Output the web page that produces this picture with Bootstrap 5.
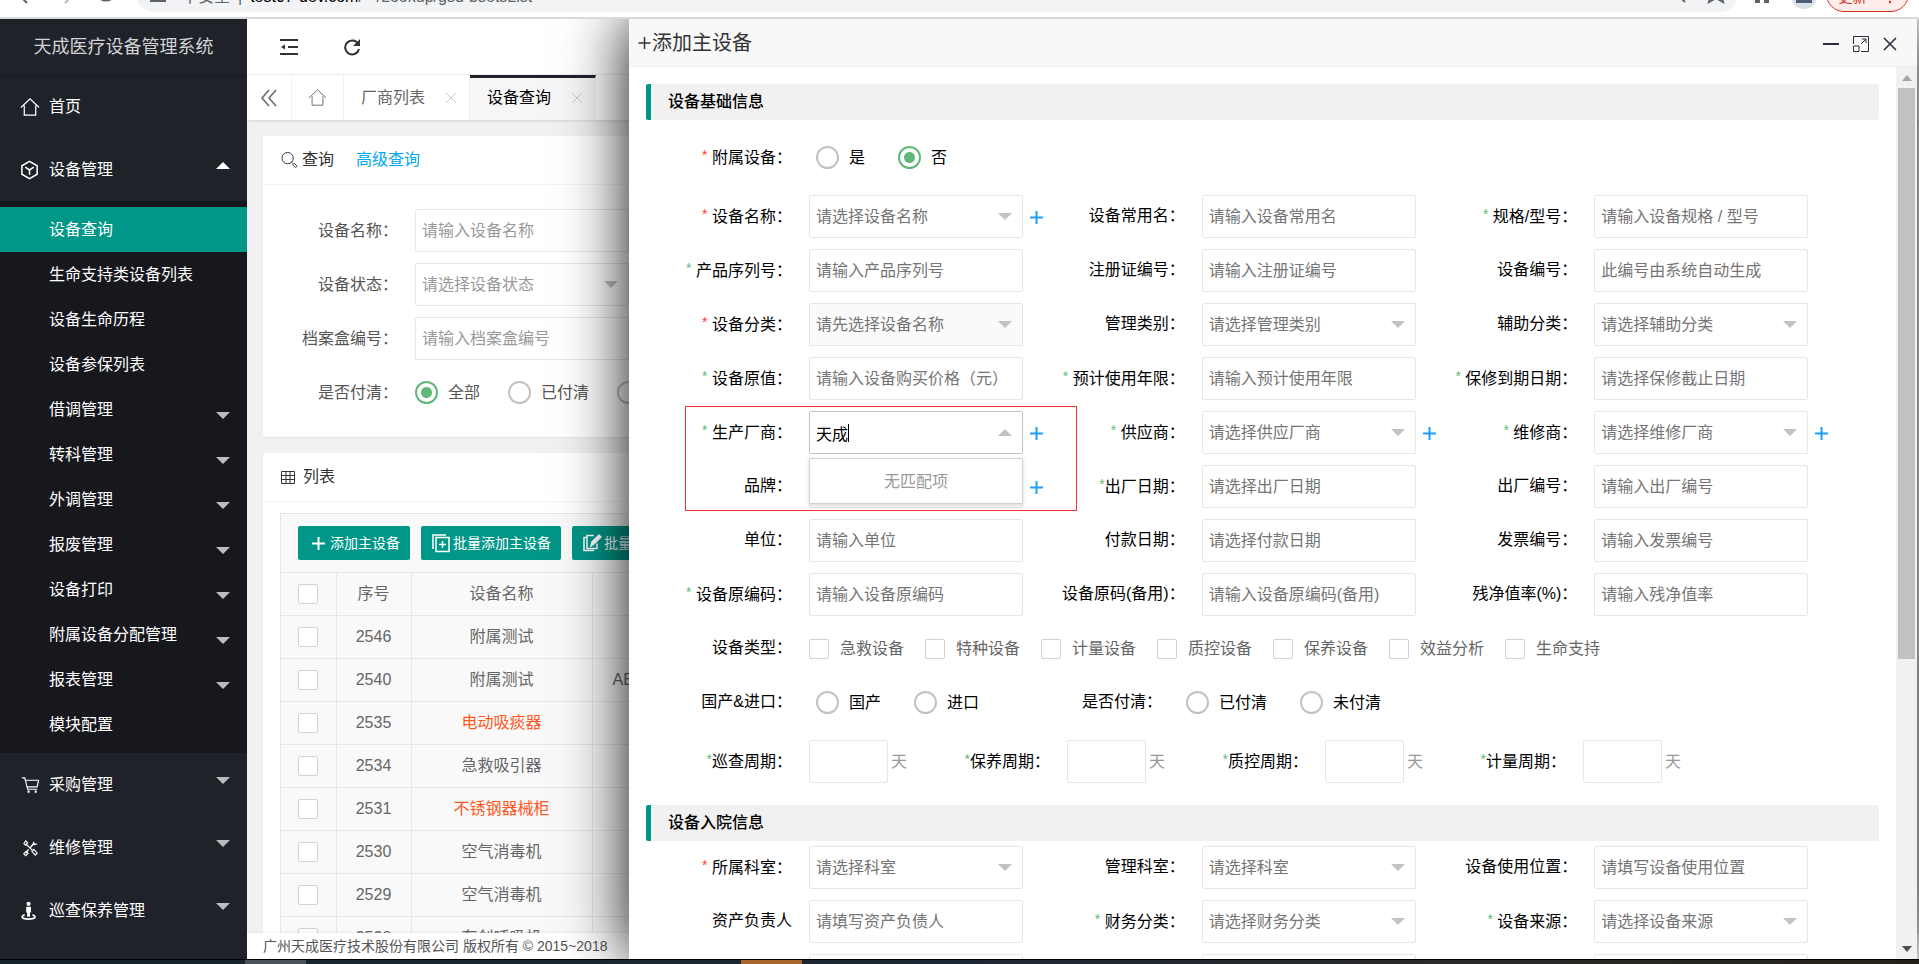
<!DOCTYPE html>
<html lang="zh-CN">
<head>
<meta charset="utf-8">
<meta name="viewport" content="width=device-width, initial-scale=1">
<title>天成医疗设备管理系统</title>
<link rel="stylesheet" href="https://cdn.jsdelivr.net/npm/bootstrap@5.3.0/dist/css/bootstrap.min.css">
<style>
  body { font: 16px/24px "Liberation Sans", "Noto Sans CJK SC", sans-serif; color: #000; background: #f1f1f1; }
  a { text-decoration: none; }
  svg { display: block; fill: none; stroke: currentColor; flex: none; }
  svg.solid { fill: currentColor; stroke: none; }
  button { background: none; border: 0; padding: 0; color: inherit; }

  /* browser strip */
  .chrome-strip { height: 19px; background: #fff; border-bottom: 2px solid #d9d9df; z-index: 5; position: relative; }
  .chrome-row { height: 36px; margin-bottom: 5px; flex: none; color: #5f6368; }
  .addr-pill { background: #f1f3f4; border-radius: 18px; height: 36px; padding-left: 14px; }
  .addr-pill > span { padding-top: 9px; }
  .update-pill { border: 1px solid #d93025; background: #fcecea; color: #d93025; border-radius: 18px; height: 36px; width: 83px; margin-right: 10px; padding-top: 8px; font-size: 14px; }
  .avatar-dot { width: 26px; height: 26px; border-radius: 50%; background: #dde1e6; margin: 0 9px 3px 21px; color: #4a5d75; }

  /* sidebar */
  .side { width: 247px; background: #20222a; color: #fff; }
  .side a { color: #fff; }
  .side-title { height: 56px; line-height: 56px; font-size: 18px; color: #d2d3d4; box-shadow: 0 1px 2px rgba(0,0,0,.25); }
  .side-top { height: 63px; padding: 0 17px 0 20px; gap: 9px; }
  .side-top svg { width: 20px; height: 20px; }
  .side-sub { background: #17181d; padding: 6px 0; }
  .side-sub a { height: 45px; padding: 0 17px 0 49px; }
  .side-sub a.on { background: #009688; }
  .tri { border: 7px solid transparent; border-top-color: #bcbdbf; border-bottom-width: 0; margin-left: auto; }
  .tri.up { border-top-width: 0; border-bottom: 7px solid #fff; }
  .side-top .tri { margin-bottom: 8px; }
  .side-sub .tri { margin-top: 11px; }

  /* main area */
  .topbar { height: 56px; background: #fff; border-bottom: 1px solid #f2f2f2; padding-left: 33px; gap: 45px; color: #333; }
  .tabbar { height: 45px; background: #fff; box-shadow: 0 1px 3px rgba(0,0,0,.12); position: relative; }
  .tabbar > * { border-right: 1px solid #f2f2f2; height: 45px; color: #666; }
  .tab-prev { width: 45px; }
  .tab-home { width: 52px; }
  .tab-item { width: 126px; padding: 0 13px 0 17px; }
  .tab-item svg { color: #c8c8c8; }
  .tab-item.on { background: #f6f6f6; color: #000; border-top: 3px solid #20222a; padding-bottom: 3px; }
  .panel { background: #fff; border-radius: 2px; box-shadow: 0 1px 2px rgba(0,0,0,.06); }
  .panel-head { height: 49px; border-bottom: 1px solid #f4f4f4; padding-left: 18px; color: #333; }
  .more-link { color: #01aaed; margin-left: 18px; }
  .q-form { padding: 24px 0 12px; }
  .q-row { height: 43px; margin-bottom: 11px; color: #555; }
  .q-row > .lab { width: 135px; margin-right: 17px; text-align: right; white-space: nowrap; }
  .q-row .box { width: 214px; }
  .q-row .opt { margin-right: 28px; }
  .q-row .box .ctl::placeholder, .q-row select.ctl { color: #999; }
  .copy { height: 26px; background: #fff; padding-left: 16px; font-size: 14px; line-height: 26px; color: #555; box-shadow: 0 -1px 2px rgba(0,0,0,.06); position: relative; }

  /* form controls */
  .box { position: relative; flex: none; }
  .ctl { display: block; width: 100%; height: 43px; border: 1px solid #e6e6e6; border-radius: 2px; background: #fff; padding: 0 6px; color: #000; appearance: none; outline: 0; }
  .ctl::placeholder { color: #757575; opacity: 1; }
  select.ctl { color: #757575; }
  select.ctl:disabled { background: #fafafa; opacity: 1; }
  .box.pick::after { content: ""; position: absolute; right: 11px; top: 18px; border: 7px solid transparent; border-top-color: #c2c2c2; border-bottom-width: 0; pointer-events: none; }
  .box.pick.open::after { border-top-width: 0; border-bottom: 7px solid #c2c2c2; }
  .box.open .ctl { border-color: #c2c2c2; caret-color: transparent; }
  .caret-bar { position: absolute; left: 39px; top: 13px; width: 1px; height: 18px; background: #000; }
  .rad { appearance: none; width: 23px; height: 23px; border: 2px solid #c2c2c2; border-radius: 50%; margin: 0 10px 0 0; background: #fff; flex: none; }
  .rad:checked { border-color: #5fb878; background: radial-gradient(circle, #5fb878 0 5px, #fff 6px); }
  .chk { appearance: none; width: 20px; height: 20px; border: 1px solid #d2d2d2; border-radius: 2px; margin: 0 11px 0 0; background: #fff; flex: none; }
  .opt { display: flex; align-items: center; margin-right: 33px; white-space: nowrap; }
  .opt.kind { margin-right: 21px; }

  /* list */
  .grid-wrap { margin: 11px 17px 0; border: 1px solid #e6e6e6; border-bottom: 0; background: #f9f9f9; }
  .tools { height: 58px; padding-left: 17px; gap: 11px; }
  .tools button { height: 34px; background: #009688; color: #fff; border-radius: 2px; font-size: 14px; padding: 0 10px 0 13px; gap: 4px; display: flex; align-items: center; white-space: nowrap; }
  .tools button.tight { padding: 0 10px; gap: 2px; }
  .grid-t { table-layout: fixed; width: 100%; color: #666; }
  .c-chk { width: 55px; }
  .c-no { width: 75px; }
  .c-name { width: 181px; }
  .grid-t th, .grid-t td { height: 43px; border: 1px solid #e6e6e6; border-left: 0; text-align: center; font-weight: 400; padding: 0; }
  .grid-t td:nth-child(4) { text-align: left; padding-left: 20px; }
  .grid-t .chk { display: block; margin: 0 auto; }
  .grid-t .hot { color: #ff5722; }

  /* dialog */
  .dlg { position: absolute; left: 629px; right: 2px; top: 0; bottom: 0; background: #fff; box-shadow: 0 0 60px rgba(0,0,0,.95); }
  .dlg-head { height: 48px; background: #f8f8f8; border-bottom: 1px solid #eee; padding: 0 20px 0 8px; font-size: 20px; color: #333; }
  .dlg-head .acts { color: #2e2d3c; gap: 14px; margin-top: 3px; }
  .dlg-body { min-height: 0; }
  .dlg-form { padding: 17px 17px 0; overflow: hidden; }
  .sec { height: 36px; line-height: 35px; font-size: 16px; font-weight: 500; margin: 0; padding-left: 17px; background: #f1f1f1; border-left: 5px solid #009688; border-radius: 2px; }
  .sec-b { margin-top: 22px; }
  .rows { padding: 16px 35px 0 20px; }
  .rows-b { padding-top: 5px; }
  .f-row { display: grid; grid-template-columns: repeat(3, minmax(0, 1fr)); margin-bottom: 11px; }
  .cell, .line { display: flex; align-items: center; height: 43px; position: relative; }
  .line { margin-bottom: 11px; }
  .lab-d { width: 126px; margin-right: 17px; text-align: right; white-space: nowrap; flex: none; padding-bottom: 2px; }
  .lab-d.next { width: 143px; }
  .cell .box { width: 214px; }
  .s-red, .s-grn { font-style: normal; color: #ff3b30; font-size: 14px; vertical-align: 3px; }
  .s-grn { color: #5fb878; }
  .addb { color: #1e9fff; margin-left: 7px; padding-top: 2px; }
  .none-menu { position: absolute; left: 0; right: 0; top: 47px; height: 46px; line-height: 46px; background: #fff; border: 1px solid #d2d2d2; border-radius: 2px; box-shadow: 0 2px 4px rgba(0,0,0,.15); text-align: center; color: #999; z-index: 2; }
  .note-box { position: absolute; left: 19px; top: -5px; width: 392px; height: 105px; border: 1px solid #f33; z-index: 3; pointer-events: none; }
  .radios { padding-left: 7px; }
  .days { width: 79px; }
  .unit { color: #999; margin-left: 3px; width: 16px; }
  .sbar { width: 21px; background: #f1f1f1; padding: 0 2px; }
  .sbar .end { height: 21px; color: #a3a3a3; }
  .sbar .end.down { color: #505050; }
  .sbar .thumb { background: #c1c1c1; width: 17px; flex: 0 0 64%; }

  .taskbar { height: 5px; border-top: 1px solid #000; background: linear-gradient(90deg, #17232b, #1d2733 50%, #2a2a2a 75%, #242119); padding-left: 245px; }
  .taskbar i { width: 61px; background: #4b5358; }
  .taskbar i + i { background: #aa652d; margin-left: 435px; }
</style>
</head>
<body class="vh-100 d-flex flex-column overflow-hidden">

<header class="chrome-strip d-flex align-items-end overflow-hidden flex-shrink-0">
  <div class="chrome-row d-flex align-items-end w-100">
    <svg width="120" height="22" viewBox="0 0 120 22" stroke-width="2" class="mb-1"><path d="M27 17l-7-7"/><path d="M65 17l7-7" stroke="#bbb"/><path d="M99 11a8 7 0 0 0 14 0"/></svg>
    <div class="addr-pill flex-grow-1 d-flex align-items-start ms-3">
      <svg class="solid" width="16" height="28" viewBox="0 0 16 28"><path d="M0 23h16v3H0z"/></svg>
      <span class="ms-3">不安全</span><span class="mx-2">|</span><span class="text-black">test07-dev.com</span><span>/ ~/Lookup/gsd-bsetsList</span>
      <svg width="60" height="28" viewBox="0 0 60 28" stroke-width="2" class="ms-auto me-2"><path d="M8 19l7 7"/><path d="M39 26l1-4h12l1 4-7-4z" fill="#5f6368"/></svg>
    </div>
    <svg class="solid ms-3" width="16" height="36" viewBox="0 0 16 36"><path d="M1 18h5v9H1zM10 18h5v9h-5z"/></svg>
    <div class="avatar-dot d-flex align-items-end justify-content-center"><svg width="16" height="10" class="solid mb-1"><path d="M0 0h16v8H0z"/></svg></div>
    <div class="update-pill d-flex justify-content-center gap-3"><span>更新</span><span class="fw-bold">⋮</span></div>
  </div>
</header>

<div class="flex-grow-1 d-flex position-relative overflow-hidden">
  <aside class="side flex-shrink-0">
    <div class="side-title text-center">天成医疗设备管理系统</div>
    <nav>
      <a href="#" class="side-top d-flex align-items-center"><svg viewBox="0 0 21 21" stroke-width="1.3"><path d="M1 11L10.500 2 20 11M4.500 9v10h12V9"/></svg>首页</a>
      <a href="#" class="side-top d-flex align-items-center"><svg viewBox="0 0 21 21" stroke-width="1.6"><path d="M10 1.500l8 4.500v9l-8 4.500L2 15V6zM5.500 7.500L10 10.500l4.500-3M10 10.500v5"/></svg>设备管理<span class="tri up"></span></a>
      <div class="side-sub">
        <a href="#" class="on d-flex align-items-center">设备查询</a>
        <a href="#" class="d-flex align-items-center">生命支持类设备列表</a>
        <a href="#" class="d-flex align-items-center">设备生命历程</a>
        <a href="#" class="d-flex align-items-center">设备参保列表</a>
        <a href="#" class="d-flex align-items-center">借调管理<span class="tri"></span></a>
        <a href="#" class="d-flex align-items-center">转科管理<span class="tri"></span></a>
        <a href="#" class="d-flex align-items-center">外调管理<span class="tri"></span></a>
        <a href="#" class="d-flex align-items-center">报废管理<span class="tri"></span></a>
        <a href="#" class="d-flex align-items-center">设备打印<span class="tri"></span></a>
        <a href="#" class="d-flex align-items-center">附属设备分配管理<span class="tri"></span></a>
        <a href="#" class="d-flex align-items-center">报表管理<span class="tri"></span></a>
        <a href="#" class="d-flex align-items-center">模块配置</a>
      </div>
      <a href="#" class="side-top d-flex align-items-center"><svg viewBox="0 0 21 21" stroke-width="1.2"><path d="M2 3h3l3 12h10M6 5.500h13.500l-1.500 7H8"/><path d="M8.500 17h1v1h-1zM16 17h1v1h-1z"/></svg>采购管理<span class="tri"></span></a>
      <a href="#" class="side-top d-flex align-items-center"><svg viewBox="0 0 21 21" stroke-width="1.4"><path d="M6 6l7 7M15 5l-4 5M9 12l-3 4"/><path d="M4 6l2-3 2 2-2 2.500zM14 4l1 3 3-1M12.500 14l2-2 3.500 4-2 2zM6.500 14l2 2-2.500 2.500-2-2z" stroke-width="1.2"/></svg>维修管理<span class="tri"></span></a>
      <a href="#" class="side-top d-flex align-items-center"><svg viewBox="0 0 21 21" stroke-width="1.8"><path d="M9 .8a2.200 2.200 0 1 1 0 4.400a2.200 2.200 0 1 1 0-4.400zM6.500 6h5v6h-1v4.500h-3V12h-1z" fill="#fff" stroke="none"/><path d="M5 14.500c-5 2-3 4.500 4 4.500s9-2.500 4-4.500"/></svg>巡查保养管理<span class="tri"></span></a>
    </nav>
  </aside>

  <main class="flex-grow-1 d-flex flex-column overflow-hidden">
    <div class="topbar d-flex align-items-center flex-shrink-0">
      <button type="button" aria-label="收起菜单"><svg width="18" height="18" viewBox="0 0 18 18" stroke-width="2"><path d="M0 2h18M8 9h10M0 16h18"/><path d="M5 6.500v5L1 9z" fill="#333" stroke="none"/></svg></button>
      <button type="button" aria-label="刷新"><svg width="18" height="18" viewBox="0 0 18 18" stroke-width="2"><path d="M15 5.500A7 7 0 1 0 16 11"/><path d="M17 1v7h-7z" fill="#333" stroke="none"/></svg></button>
    </div>
    <div class="tabbar d-flex flex-shrink-0">
      <button type="button" aria-label="向左" class="tab-prev d-flex align-items-center justify-content-center"><svg width="18" height="18" viewBox="0 0 18 18" stroke-width="1.5"><path d="M9 1L2 9l7 8M16 1L9 9l7 8"/></svg></button>
      <a href="#" aria-label="首页" class="tab-home d-flex align-items-center justify-content-center"><svg width="19" height="19" viewBox="0 0 21 21"><path d="M1 11L10.500 2 20 11M4.500 9v10h12V9"/></svg></a>
      <div class="tab-item d-flex align-items-center justify-content-between">厂商列表<svg width="10" height="10"><path d="M0 0l10 10M10 0L0 10"/></svg></div>
      <div class="tab-item on d-flex align-items-center justify-content-between">设备查询<svg width="10" height="10"><path d="M0 0l10 10M10 0L0 10"/></svg></div>
    </div>

    <div class="flex-grow-1 overflow-hidden px-3 pt-3">
      <section class="panel">
        <div class="panel-head d-flex align-items-center gap-1"><svg width="17" height="18" viewBox="0 0 18 18"><circle cx="7" cy="7" r="6"/><path d="M11 11l2 2M12.500 14l3 3 1.500-1.500-3-3z"/></svg>查询 <a href="#" class="more-link">高级查询</a></div>
        <form class="q-form">
          <div class="q-row d-flex align-items-center"><label class="lab" for="q1">设备名称：</label><div class="box"><input class="ctl" id="q1" placeholder="请输入设备名称"></div></div>
          <div class="q-row d-flex align-items-center"><label class="lab" for="q2">设备状态：</label><div class="box pick"><select class="ctl" id="q2"><option>请选择设备状态</option></select></div></div>
          <div class="q-row d-flex align-items-center"><label class="lab" for="q3">档案盒编号：</label><div class="box"><input class="ctl" id="q3" placeholder="请输入档案盒编号"></div></div>
          <div class="q-row d-flex align-items-center"><span class="lab">是否付清：</span>
            <label class="opt"><input class="rad" type="radio" name="qp" checked>全部</label>
            <label class="opt"><input class="rad" type="radio" name="qp">已付清</label>
            <label class="opt"><input class="rad" type="radio" name="qp" aria-label="未付清"></label></div>
        </form>
      </section>

      <section class="panel mt-3">
        <div class="panel-head d-flex align-items-center gap-2"><svg width="14" height="13" viewBox="0 0 14 13"><path d="M.5.5h13v12H.5zM.5 4.500h13M.5 8.500h13M5 .5v12M9 .5v12"/></svg>列表</div>
        <div class="grid-wrap">
          <div class="tools d-flex align-items-center">
            <button type="button"><svg width="15" height="15" viewBox="0 0 15 15" stroke-width="2"><path d="M7.500 1v13M1 7.500h13"/></svg>添加主设备</button>
            <button type="button" class="tight"><svg width="20" height="20" viewBox="0 0 20 20" stroke-width="1.5"><path d="M5 4.500h13v14H5zM15 2H2v14M11.500 8v7M8 11.500h7"/></svg>批量添加主设备</button>
            <button type="button" class="tight"><svg width="20" height="20" viewBox="0 0 20 20" stroke-width="1.5"><path d="M12 2.500H5v13h10v-5M5 4.500H2v13h10"/><path d="M9 13l1-4 7-7 2 2-7 7z" fill="#fff"/></svg>批量修改</button>
          </div>
          <table class="grid-t">
            <colgroup><col class="c-chk"><col class="c-no"><col class="c-name"><col></colgroup>
            <thead><tr><th><input class="chk" type="checkbox" aria-label="全选"></th><th>序号</th><th>设备名称</th><th></th></tr></thead>
            <tbody>
              <tr><td><input class="chk" type="checkbox" aria-label="选择 2546"></td><td>2546</td><td>附属测试</td><td></td></tr>
              <tr><td><input class="chk" type="checkbox" aria-label="选择 2540"></td><td>2540</td><td>附属测试</td><td>AE</td></tr>
              <tr><td><input class="chk" type="checkbox" aria-label="选择 2535"></td><td>2535</td><td class="hot">电动吸痰器</td><td></td></tr>
              <tr><td><input class="chk" type="checkbox" aria-label="选择 2534"></td><td>2534</td><td>急救吸引器</td><td></td></tr>
              <tr><td><input class="chk" type="checkbox" aria-label="选择 2531"></td><td>2531</td><td class="hot">不锈钢器械柜</td><td></td></tr>
              <tr><td><input class="chk" type="checkbox" aria-label="选择 2530"></td><td>2530</td><td>空气消毒机</td><td></td></tr>
              <tr><td><input class="chk" type="checkbox" aria-label="选择 2529"></td><td>2529</td><td>空气消毒机</td><td></td></tr>
              <tr><td><input class="chk" type="checkbox" aria-label="选择 2528"></td><td>2528</td><td>有创呼吸机</td><td></td></tr>
            </tbody>
          </table>
        </div>
      </section>
    </div>
    <footer class="copy flex-shrink-0">广州天成医疗技术股份有限公司 版权所有 © 2015~2018</footer>
  </main>

  <div class="dlg d-flex flex-column" role="dialog" aria-labelledby="dt">
    <div class="dlg-head d-flex align-items-center flex-shrink-0">
      <div id="dt" class="d-flex align-items-center"><svg width="15" height="14" viewBox="0 0 15 14" stroke-width="1.5"><path d="M7.500 1v12M1.500 7h12"/></svg>添加主设备</div>
      <div class="acts d-flex align-items-center ms-auto">
        <button type="button" aria-label="最小化"><svg width="16" height="16" stroke-width="2"><path d="M0 8h16"/></svg></button>
        <button type="button" aria-label="最大化"><svg width="16" height="16" viewBox="0 0 16 16"><path d="M.5 8V.5h15v15H8M.5 10h5.500v5.500H.5zM8 8l5-5M9 3h4v4"/></svg></button>
        <button type="button" aria-label="关闭"><svg width="14" height="14" stroke-width="1.6"><path d="M1 1l12 12M13 1L1 13"/></svg></button>
      </div>
    </div>
    <div class="dlg-body d-flex flex-grow-1">
      <form class="dlg-form flex-grow-1">
        <h2 class="sec">设备基础信息</h2>
        <div class="rows">
          <div class="line mb-3"><span class="lab-d"><i class="s-red">*</i> 附属设备：</span><div class="radios d-flex">
            <label class="opt"><input class="rad" type="radio" name="sub">是</label><label class="opt"><input class="rad" type="radio" name="sub" checked>否</label></div></div>

          <div class="f-row">
            <div class="cell"><label class="lab-d" for="a1"><i class="s-red">*</i> 设备名称：</label><div class="box pick"><select class="ctl" id="a1"><option>请选择设备名称</option></select></div><button type="button" class="addb" aria-label="添加"><svg width="13" height="13" stroke-width="2"><path d="M6.500 0v13M0 6.500h13"/></svg></button></div>
            <div class="cell"><label class="lab-d" for="a2">设备常用名：</label><div class="box"><input class="ctl" id="a2" placeholder="请输入设备常用名"></div></div>
            <div class="cell"><label class="lab-d" for="a3"><i class="s-grn">*</i> 规格/型号：</label><div class="box"><input class="ctl" id="a3" placeholder="请输入设备规格 / 型号"></div></div>
          </div>
          <div class="f-row">
            <div class="cell"><label class="lab-d" for="b1"><i class="s-grn">*</i> 产品序列号：</label><div class="box"><input class="ctl" id="b1" placeholder="请输入产品序列号"></div></div>
            <div class="cell"><label class="lab-d" for="b2">注册证编号：</label><div class="box"><input class="ctl" id="b2" placeholder="请输入注册证编号"></div></div>
            <div class="cell"><label class="lab-d" for="b3">设备编号：</label><div class="box"><input class="ctl" id="b3" placeholder="此编号由系统自动生成"></div></div>
          </div>
          <div class="f-row">
            <div class="cell"><label class="lab-d" for="c1"><i class="s-red">*</i> 设备分类：</label><div class="box pick"><select class="ctl" id="c1" disabled><option>请先选择设备名称</option></select></div></div>
            <div class="cell"><label class="lab-d" for="c2">管理类别：</label><div class="box pick"><select class="ctl" id="c2"><option>请选择管理类别</option></select></div></div>
            <div class="cell"><label class="lab-d" for="c3">辅助分类：</label><div class="box pick"><select class="ctl" id="c3"><option>请选择辅助分类</option></select></div></div>
          </div>
          <div class="f-row">
            <div class="cell"><label class="lab-d" for="d1"><i class="s-grn">*</i> 设备原值：</label><div class="box"><input class="ctl" id="d1" placeholder="请输入设备购买价格（元）"></div></div>
            <div class="cell"><label class="lab-d" for="d2"><i class="s-grn">*</i> 预计使用年限：</label><div class="box"><input class="ctl" id="d2" placeholder="请输入预计使用年限"></div></div>
            <div class="cell"><label class="lab-d" for="d3"><i class="s-grn">*</i> 保修到期日期：</label><div class="box"><input class="ctl" id="d3" placeholder="请选择保修截止日期"></div></div>
          </div>
          <div class="f-row">
            <div class="cell"><span class="note-box"></span><label class="lab-d" for="e1"><i class="s-grn">*</i> 生产厂商：</label><div class="box pick open"><input class="ctl" id="e1" value="天成"><span class="caret-bar"></span><div class="none-menu">无匹配项</div></div><button type="button" class="addb" aria-label="添加"><svg width="13" height="13" stroke-width="2"><path d="M6.500 0v13M0 6.500h13"/></svg></button></div>
            <div class="cell"><label class="lab-d" for="e2"><i class="s-grn">*</i> 供应商：</label><div class="box pick"><select class="ctl" id="e2"><option>请选择供应厂商</option></select></div><button type="button" class="addb" aria-label="添加"><svg width="13" height="13" stroke-width="2"><path d="M6.500 0v13M0 6.500h13"/></svg></button></div>
            <div class="cell"><label class="lab-d" for="e3"><i class="s-grn">*</i> 维修商：</label><div class="box pick"><select class="ctl" id="e3"><option>请选择维修厂商</option></select></div><button type="button" class="addb" aria-label="添加"><svg width="13" height="13" stroke-width="2"><path d="M6.500 0v13M0 6.500h13"/></svg></button></div>
          </div>
          <div class="f-row">
            <div class="cell"><label class="lab-d" for="f1">品牌：</label><div class="box"><select class="ctl" id="f1"><option></option></select></div><button type="button" class="addb" aria-label="添加"><svg width="13" height="13" stroke-width="2"><path d="M6.500 0v13M0 6.500h13"/></svg></button></div>
            <div class="cell"><label class="lab-d" for="f2"><i class="s-grn">*</i>出厂日期：</label><div class="box"><input class="ctl" id="f2" placeholder="请选择出厂日期"></div></div>
            <div class="cell"><label class="lab-d" for="f3">出厂编号：</label><div class="box"><input class="ctl" id="f3" placeholder="请输入出厂编号"></div></div>
          </div>
          <div class="f-row">
            <div class="cell"><label class="lab-d" for="g1">单位：</label><div class="box"><input class="ctl" id="g1" placeholder="请输入单位"></div></div>
            <div class="cell"><label class="lab-d" for="g2">付款日期：</label><div class="box"><input class="ctl" id="g2" placeholder="请选择付款日期"></div></div>
            <div class="cell"><label class="lab-d" for="g3">发票编号：</label><div class="box"><input class="ctl" id="g3" placeholder="请输入发票编号"></div></div>
          </div>
          <div class="f-row">
            <div class="cell"><label class="lab-d" for="h1"><i class="s-grn">*</i> 设备原编码：</label><div class="box"><input class="ctl" id="h1" placeholder="请输入设备原编码"></div></div>
            <div class="cell"><label class="lab-d" for="h2">设备原码(备用)：</label><div class="box"><input class="ctl" id="h2" placeholder="请输入设备原编码(备用)"></div></div>
            <div class="cell"><label class="lab-d" for="h3">残净值率(%)：</label><div class="box"><input class="ctl" id="h3" placeholder="请输入残净值率"></div></div>
          </div>

          <div class="line" style="color:#666"><span class="lab-d text-black">设备类型：</span>
            <label class="opt kind"><input class="chk" type="checkbox">急救设备</label><label class="opt kind"><input class="chk" type="checkbox">特种设备</label><label class="opt kind"><input class="chk" type="checkbox">计量设备</label><label class="opt kind"><input class="chk" type="checkbox">质控设备</label><label class="opt kind"><input class="chk" type="checkbox">保养设备</label><label class="opt kind"><input class="chk" type="checkbox">效益分析</label><label class="opt kind"><input class="chk" type="checkbox">生命支持</label></div>

          <div class="line mb-3"><span class="lab-d">国产&amp;进口：</span><div class="radios d-flex">
            <label class="opt"><input class="rad" type="radio" name="src">国产</label><label class="opt"><input class="rad" type="radio" name="src">进口</label></div>
            <span class="lab-d ms-4">是否付清：</span><div class="radios d-flex">
            <label class="opt"><input class="rad" type="radio" name="paid">已付清</label><label class="opt"><input class="rad" type="radio" name="paid">未付清</label></div></div>

          <div class="line">
            <label class="lab-d" for="p1"><i class="s-grn">*</i>巡查周期：</label><div class="box days"><input class="ctl" id="p1"></div><span class="unit">天</span>
            <label class="lab-d next" for="p2"><i class="s-grn">*</i>保养周期：</label><div class="box days"><input class="ctl" id="p2"></div><span class="unit">天</span>
            <label class="lab-d next" for="p3"><i class="s-grn">*</i>质控周期：</label><div class="box days"><input class="ctl" id="p3"></div><span class="unit">天</span>
            <label class="lab-d next" for="p4"><i class="s-grn">*</i>计量周期：</label><div class="box days"><input class="ctl" id="p4"></div><span class="unit">天</span>
          </div>
        </div>

        <h2 class="sec sec-b">设备入院信息</h2>
        <div class="rows rows-b">
          <div class="f-row">
            <div class="cell"><label class="lab-d" for="k1"><i class="s-red">*</i> 所属科室：</label><div class="box pick"><select class="ctl" id="k1"><option>请选择科室</option></select></div></div>
            <div class="cell"><label class="lab-d" for="k2">管理科室：</label><div class="box pick"><select class="ctl" id="k2"><option>请选择科室</option></select></div></div>
            <div class="cell"><label class="lab-d" for="k3">设备使用位置：</label><div class="box"><input class="ctl" id="k3" placeholder="请填写设备使用位置"></div></div>
          </div>
          <div class="f-row">
            <div class="cell"><label class="lab-d" for="m1">资产负责人</label><div class="box"><input class="ctl" id="m1" placeholder="请填写资产负债人"></div></div>
            <div class="cell"><label class="lab-d" for="m2"><i class="s-grn">*</i> 财务分类：</label><div class="box pick"><select class="ctl" id="m2"><option>请选择财务分类</option></select></div></div>
            <div class="cell"><label class="lab-d" for="m3"><i class="s-grn">*</i> 设备来源：</label><div class="box pick"><select class="ctl" id="m3"><option>请选择设备来源</option></select></div></div>
          </div>
          <div class="f-row">
            <div class="cell"><span class="lab-d"></span><div class="box"><input class="ctl" aria-label="备注一"></div></div>
            <div class="cell"><span class="lab-d"></span><div class="box"><input class="ctl" aria-label="备注二"></div></div>
            <div class="cell"><span class="lab-d"></span><div class="box"><input class="ctl" aria-label="备注三"></div></div>
          </div>
        </div>
      </form>
      <div class="sbar d-flex flex-column flex-shrink-0" aria-hidden="true">
        <div class="end d-flex align-items-center justify-content-center"><svg class="solid" width="10" height="6"><path d="M0 6l5-6 5 6z"/></svg></div>
        <div class="thumb"></div>
        <div class="end down mt-auto d-flex align-items-center justify-content-center"><svg class="solid" width="10" height="6"><path d="M0 0l5 6 5-6z"/></svg></div>
      </div>
    </div>
  </div>
</div>

<div class="taskbar d-flex flex-shrink-0" aria-hidden="true"><i></i><i></i></div>

<script src="https://cdn.jsdelivr.net/npm/bootstrap@5.3.0/dist/js/bootstrap.bundle.min.js"></script>
</body>
</html>
